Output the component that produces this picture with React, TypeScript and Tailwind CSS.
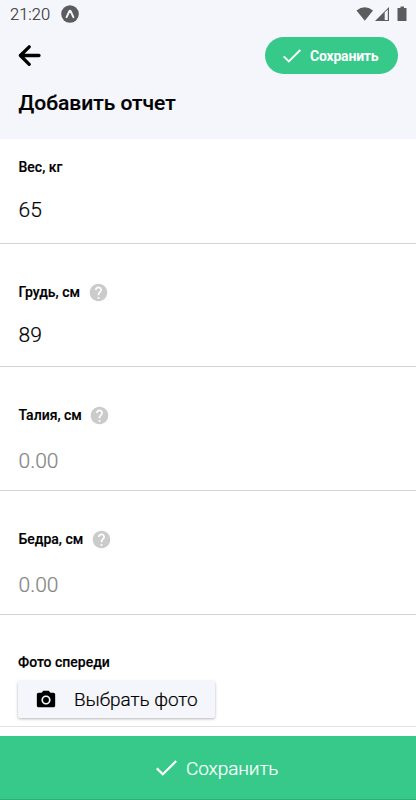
import { MdCameraAlt, MdHelp } from "react-icons/md";

type FieldProps = {
  label: string;
  value?: string;
  help?: boolean;
  className?: string;
};

const Check = ({ className }: { className: string }) => {
  return (
    <svg className={className} viewBox="0 0 21 16" fill="none" stroke="currentColor" strokeWidth="2.2">
      <path d="M0.8 8.4 6.8 14.3 20.2 1" />
    </svg>
  );
};

const StatusBar = () => {
  return (
    <div className="flex h-7 items-center pl-[10px] pr-[9px]">
      <span className="pt-px text-[16.5px] font-light leading-7 text-[#333335] [-webkit-text-stroke:0.15px]">
        21:20
      </span>
      <svg className="ml-[11px]" width="18" height="18" viewBox="0 0 18 18">
        <circle cx="9" cy="9" r="8.8" fill="#5c5c5e" />
        <path
          d="M5.6 12.2 8.3 6.3Q9 5.2 9.7 6.3L12.4 12.2"
          fill="none"
          stroke="#f4f6fb"
          strokeWidth="1.9"
          strokeLinecap="round"
        />
      </svg>
      <svg className="ml-auto" width="51" height="16" viewBox="0 0 51 16">
        <path d="M0.5 4.5Q8.8-2 17 4.5L8.8 14.8Z" fill="#5c5c5e" />
        <path d="M19 15 33 1V15Z" fill="#5c5c5e" />
        <path d="M28.7 6.5 31.8 3.4V13.9H28.7Z" fill="#f4f6fb" />
        <path d="M44.5 0.5h3.5v1.5h2.5v13h-9V2h3Z" fill="#5c5c5e" />
      </svg>
    </div>
  );
};

const Header = () => {
  return (
    <header className="h-[139px] shrink-0 bg-[#f4f6fb]">
      <StatusBar />
      <div className="flex items-center justify-between pl-[18px] pr-[18px] pt-[9px]">
        <button>
          <svg
            width="23"
            height="22"
            viewBox="0 0 23 22"
            fill="none"
            stroke="#000"
            strokeWidth="3.3"
            strokeLinecap="round"
            strokeLinejoin="round"
          >
            <path d="M11.2 1.8 2.4 10.5l8.8 8.8M3 10.5h18" />
          </svg>
        </button>
        <button className="flex h-[37px] w-[133px] items-center rounded-full bg-[#37c98a] pl-[18px] text-white">
          <Check className="h-[14px] w-[18px]" />
          <span className="ml-[9px] pt-px text-sm font-bold tracking-[-0.2px]">Сохранить</span>
        </button>
      </div>
      <h1 className="pl-[18.5px] pt-[15px] text-[21px] font-medium leading-7 [-webkit-text-stroke:0.2px]">
        Добавить отчет
      </h1>
    </header>
  );
};

const Field = ({ label, value, help, className = "h-[124px] pt-[38px]" }: FieldProps) => {
  return (
    <div className={`border-b border-[#d3d3da] pl-[18.5px] ${className}`}>
      <div className="flex h-5 items-center">
        <span className="text-sm font-medium [-webkit-text-stroke:0.15px]">{label}</span>
        {help && <MdHelp className="ml-[7.5px] text-[#cbcbcb]" size={21} />}
      </div>
      {value ? (
        <p className="pt-[19px] text-[21px] font-light leading-[28px] [-webkit-text-stroke:0.2px]">{value}</p>
      ) : (
        <p className="pt-[22px] text-[21px] font-light leading-[28px] text-[#858585] [-webkit-text-stroke:0.2px]">
          0.00
        </p>
      )}
    </div>
  );
};

const App = () => {
  return (
    <div className="flex h-[800px] w-[416px] flex-col overflow-hidden bg-white font-[Roboto,sans-serif] text-black">
      <Header />
      <main className="flex-1">
        <Field label="Вес, кг" value="65" className="h-[105px] pt-[18px]" />
        <Field label="Грудь, см" value="89" help className="h-[123px] pt-[38px]" />
        <Field label="Талия, см" help />
        <Field label="Бедра, см" help />
        <div className="h-[112px] border-b border-[#e2e2e4] pl-[18px] pt-[37px]">
          <p className="text-sm font-medium leading-5 [-webkit-text-stroke:0.15px]">Фото спереди</p>
          <button className="mt-[9px] flex h-[37px] w-[197px] items-center rounded-xs bg-[#f4f6fb] pl-[17px] shadow-[0_1px_3px_rgba(0,0,0,0.3)]">
            <MdCameraAlt size={22} />
            <span className="ml-[17px] pt-px text-[19px] font-light tracking-[-0.05px] [-webkit-text-stroke:0.2px]">
              Выбрать фото
            </span>
          </button>
        </div>
      </main>
      <button className="flex h-16 shrink-0 items-center border-b border-[#2faf78] bg-[#37c98a] pl-[156px] text-white">
        <Check className="h-4 w-[21px]" />
        <span className="ml-[9px] pt-[3px] text-[19px] font-light tracking-[-0.1px] [-webkit-text-stroke:0.2px]">
          Сохранить
        </span>
      </button>
    </div>
  );
};

export default App;
